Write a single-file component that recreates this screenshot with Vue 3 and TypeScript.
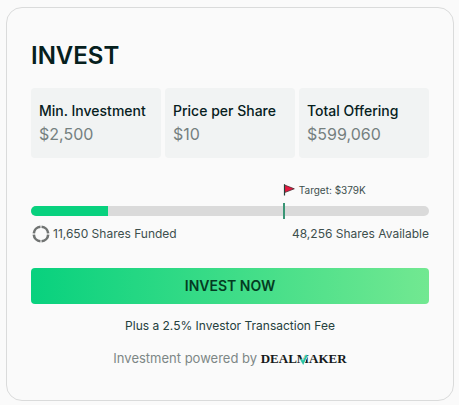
<script setup lang="ts">
interface Stat {
  label: string
  value: string
}

const stats: Stat[] = [
  { label: 'Min. Investment', value: '$2,500' },
  { label: 'Price per Share', value: '$10' },
  { label: 'Total Offering', value: '$599,060' },
]

const sharesFunded = 11650
const sharesAvailable = 48256
const offering = 599060
const target = 379000

const fundedPercent = (sharesFunded / (sharesFunded + sharesAvailable)) * 100
const targetPercent = (target / offering) * 100

const format = (n: number): string => n.toLocaleString('en-US')
</script>

<template>
  <main class="card">
    <h1 class="title">INVEST</h1>

    <dl class="stats">
      <div v-for="stat in stats" :key="stat.label" class="stat">
        <dt>{{ stat.label }}</dt>
        <dd>{{ stat.value }}</dd>
      </div>
    </dl>

    <section class="progress">
      <div class="target" :style="{ marginLeft: targetPercent + '%' }">
        <svg width="12" height="12" viewBox="0 0 12 12" aria-hidden="true">
          <path d="M1.5 1 L11.3 4.8 L1.5 8.6 Z" fill="#e5173f" stroke="#4a2a2e" stroke-width="0.8" />
          <path d="M1.5 0.2 V11.5" stroke="#26413a" stroke-width="1.2" />
        </svg>
        <span>Target: $379K</span>
      </div>
      <div class="track">
        <div class="fill" :style="{ width: fundedPercent + '%' }"></div>
        <div class="marker" :style="{ left: targetPercent + '%' }"></div>
      </div>
      <div class="shares">
        <span class="funded">
          <svg width="20" height="20" viewBox="0 0 20 20" aria-hidden="true">
            <circle
              cx="10" cy="10" r="7.2" fill="none" stroke="#707372" stroke-width="2.6"
              pathLength="100" stroke-dasharray="22.5 2.5" stroke-dashoffset="-1.25"
            />
          </svg>
          {{ format(sharesFunded) }} Shares Funded
        </span>
        <span>{{ format(sharesAvailable) }} Shares Available</span>
      </div>
    </section>

    <button type="button" class="invest">INVEST NOW</button>
    <p class="fee">Plus a 2.5% Investor Transaction Fee</p>
    <p class="powered">
      Investment powered by
      <span class="brand">DEAL<span class="m">M<svg viewBox="0 0 12 12" aria-hidden="true">
        <path d="M4.2 6.4 L6.2 9.8 L9.6 2.6" fill="none" stroke="#fafafa" stroke-width="3" />
        <path d="M4 6 L6.1 9.8 L9.8 2" fill="none" stroke="#2bc4a5" stroke-width="2" />
      </svg></span>AKER</span>
    </p>
  </main>
</template>

<style>
body {
  background: #fafafa;
}
</style>

<style scoped>
.card {
  margin: 7px 5px 4px 6px;
  padding: 32px 24px;
  border: 1px solid #dadbdb;
  border-radius: 16px;
  background: #fafafa;
  color: #3d4f4d;
  font-family: Inter, "Liberation Sans", sans-serif;
  font-size: 12px;
  line-height: 20px;
}

.title {
  margin: 0 0 16px;
  color: #06201d;
  font-size: 24px;
  font-weight: 600;
  line-height: 32px;
}

.stats {
  display: grid;
  grid-template-columns: repeat(3, 1fr);
  gap: 4px;
  margin: 0;
}

.stat {
  padding: 12px 8px;
  border-radius: 4px;
  background: #f1f3f3;
}

.stat dt {
  color: #06201d;
  font-size: 14px;
  font-weight: 500;
  line-height: 22px;
  white-space: nowrap;
}

.stat dd {
  margin: 0;
  color: #75807f;
  font-size: 16px;
  line-height: 24px;
}

.progress {
  margin: 24px 0;
}

.target {
  display: flex;
  align-items: center;
  gap: 4px;
  margin-bottom: 8px;
  font-size: 10px;
  line-height: 16px;
  white-space: nowrap;
}

.track {
  position: relative;
  height: 10px;
  border-radius: 5px;
  background: #dadada;
}

.fill {
  height: 100%;
  border-radius: 5px 0 0 5px;
  background: #08d17e;
}

.marker {
  position: absolute;
  top: -3px;
  bottom: -3px;
  width: 2px;
  background: #399575;
}

.shares {
  display: flex;
  justify-content: space-between;
  margin-top: 8px;
}

.funded {
  display: flex;
  align-items: center;
  gap: 2px;
}

.invest {
  display: block;
  width: 100%;
  height: 36px;
  padding: 0;
  border: 0;
  border-radius: 4px;
  background: linear-gradient(90deg, #08d17e, #72e891);
  color: #043b22;
  font: inherit;
  font-size: 14px;
  font-weight: 600;
  cursor: pointer;
}

.fee {
  margin: 12px 0;
  color: #24403d;
  text-align: center;
}

.powered {
  margin: 0;
  color: #7d8786;
  font-size: 13px;
  text-align: center;
}

.brand {
  color: #161a1a;
  font-family: "Liberation Serif", serif;
  font-weight: 700;
  line-height: 16px;
}

.m {
  position: relative;
}

.m svg {
  position: absolute;
  left: 0;
  bottom: 1px;
  width: 12px;
  height: 12px;
}
</style>
